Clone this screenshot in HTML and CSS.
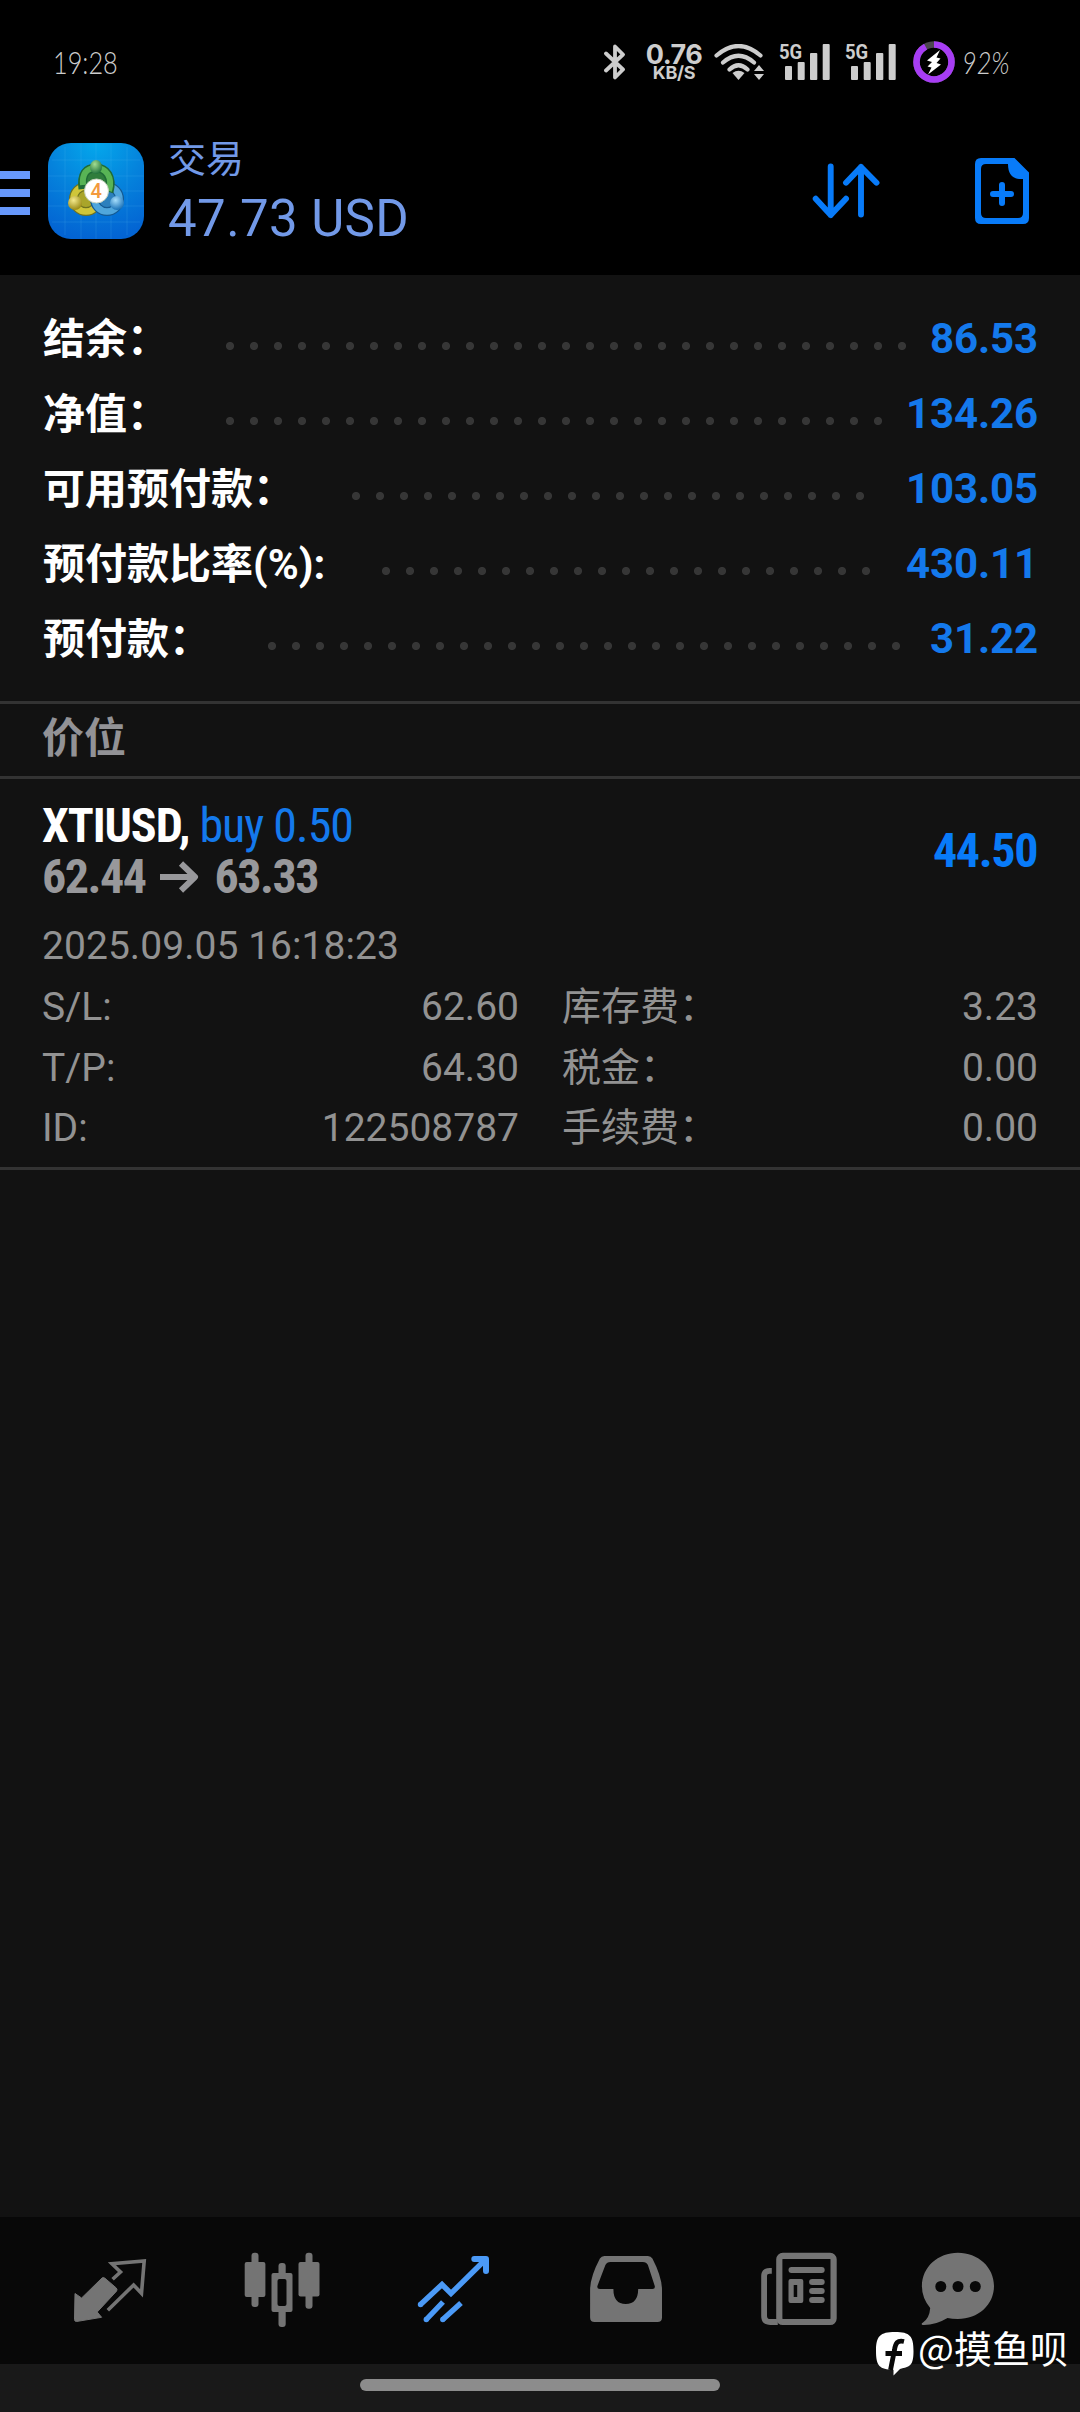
FILE: index.html
```html
<!DOCTYPE html>
<html lang="zh-CN">
<head>
<meta charset="utf-8">
<meta name="viewport" content="width=device-width">
<title>交易</title>
<link rel="stylesheet" href="styles.css">
</head>
<body>
<div class="screen">
  <div class="status">
    <span class="clock">19:28</span>
    <svg class="bt" width="22" height="38" viewBox="0 0 22 38"><path d="M2 10.5 19 26.5 11 34.5V3.500L19 11.500 2 27.500" fill="none" stroke="#cdcdcd" stroke-width="3.8" stroke-linejoin="round" stroke-linecap="round"/></svg>
    <div class="rate"><span class="rate-n">0.76</span><span class="rate-u">KB/S</span></div>
    <svg class="wifi" width="51" height="36" viewBox="0 0 51 36" fill="none" stroke="#cdcdcd" stroke-width="4.200" stroke-linecap="round"><path d="M2.500 11.500Q24.500-7.500 46.500 11.500M9 18.500Q24.500 5 40 18.500M15.500 25.500Q24.500 17 33.500 25.500"/><path d="M18.500 29Q24.500 24.500 30.500 29L24.500 36Z" fill="#cdcdcd" stroke="none"/><path d="M40 27 45 21 50 27ZM40 30 45 36 50 30Z" fill="#cdcdcd" stroke="none"/></svg>
    <div class="signal"><span class="gen">5G</span><svg width="51" height="36" viewBox="0 0 51 36" fill="#cdcdcd"><rect x="6" y="22" width="7" height="14" rx="1"/><rect x="18.700" y="18" width="7" height="18" rx="1"/><rect x="31" y="9" width="7.300" height="27" rx="1"/><rect x="43.700" y="0" width="7" height="36" rx="1"/></svg></div>
    <div class="signal second"><span class="gen">5G</span><svg width="51" height="36" viewBox="0 0 51 36" fill="#cdcdcd"><rect x="6" y="22" width="7" height="14" rx="1"/><rect x="18.700" y="18" width="7" height="18" rx="1"/><rect x="31" y="9" width="7.300" height="27" rx="1"/><rect x="43.700" y="0" width="7" height="36" rx="1"/></svg></div>
    <svg class="ring" width="42" height="42" viewBox="0 0 42 42"><circle cx="21" cy="21" r="17.500" fill="none" stroke="#4c474f" stroke-width="6.600"/><circle cx="21" cy="21" r="17.500" fill="none" stroke="#a73df4" stroke-width="6.600" pathLength="100" stroke-dasharray="92 8" transform="rotate(-90 21 21)"/><path d="M27 9 14 19.500 19 21 14.500 25.500 18.500 26.500 15 33.500 28 23.500 23.500 22 27.500 17.500 23.500 16.500Z" fill="#fff"/></svg>
    <span class="pct">92%</span>
  </div>

  <header class="top">
    <div class="menu"><i></i><i></i><i></i></div>
    <svg class="logo" width="96" height="96" viewBox="0 0 96 96">
      <defs>
        <radialGradient id="bg" cx=".5" cy="0" r="1"><stop offset="0" stop-color="#04a8ec"/><stop offset=".5" stop-color="#0583dc"/><stop offset="1" stop-color="#0364d3"/></radialGradient>
        <radialGradient id="g" cx=".4" cy=".3" r=".7"><stop offset="0" stop-color="#a3dd91"/><stop offset="1" stop-color="#21733c"/></radialGradient>
        <radialGradient id="y" cx=".4" cy=".3" r=".7"><stop offset="0" stop-color="#f4e98c"/><stop offset="1" stop-color="#9b8b16"/></radialGradient>
        <radialGradient id="b" cx=".4" cy=".3" r=".7"><stop offset="0" stop-color="#a5ddfb"/><stop offset="1" stop-color="#1a72b8"/></radialGradient>
      </defs>
      <rect width="96" height="96" rx="23" fill="url(#bg)"/>
      <path d="M17 4V92M33 0V96M48 0V96M63 0V96M79 4V92M4 17H92M0 33H96M0 48H96M0 63H96M4 79H92" stroke="#5bc3f5" stroke-opacity=".18" stroke-width="1"/>
      <circle cx="38" cy="56" r="12.500" fill="#a9a52a" stroke="#6f7220" stroke-width="9"/>
      <circle cx="38" cy="56" r="12.500" fill="none" stroke="#cfc63a" stroke-width="6.500"/>
      <circle cx="59" cy="56" r="12.500" fill="#2c80bd" stroke="#145a93" stroke-width="9"/>
      <circle cx="59" cy="56" r="12.500" fill="none" stroke="#4fa6dc" stroke-width="6.500"/>
      <path d="M35 46C33 31 38 25 48 25S65 34 61 49" fill="#2f7d3c" stroke="#1f6b35" stroke-width="9"/>
      <path d="M35 42C34 31 38 25 48 25S65 34 61 48" fill="none" stroke="#58b455" stroke-width="6"/>
      <ellipse cx="48" cy="24" rx="6" ry="7" fill="url(#g)"/>
      <circle cx="27" cy="60" r="7" fill="url(#y)"/>
      <circle cx="69" cy="60" r="7" fill="url(#b)"/>
      <circle cx="48.500" cy="48" r="12" fill="#fff" stroke="#c5d2be" stroke-width="1"/>
      <text x="48.200" y="55" text-anchor="middle" class="logo-n">4</text>
    </svg>
    <div class="heading"><div class="name">交易</div><div class="total">47.73 USD</div></div>
    <svg class="sort" width="68" height="58" viewBox="812 162 68 58" fill="none" stroke="#087bf9" stroke-width="5.900" stroke-linecap="round" stroke-linejoin="round"><path d="M830.700 166.500V215M815.700 198.700 830.700 215 846 198.700M861 214.500V167M846 182.700 861 167 876.500 182.700"/></svg>
    <svg class="add" width="54" height="66" viewBox="0 0 54 66" fill="#087bf9"><path fill-rule="evenodd" d="M6 0H39.500L54 14.500V60Q54 66 48 66H6Q0 66 0 60V6Q0 0 6 0ZM11 6Q6 6 6 11V55Q6 60 11 60H43Q48 60 48 55V21H44Q33 20 33 6Z"/><path d="M27 27V45M18 36H36" stroke="#087bf9" stroke-width="6" stroke-linecap="round"/></svg>
  </header>

  <section class="summary">
    <div class="line"><span class="label">结余：</span><i class="dots" style="--dots:29"></i><b>86.53</b></div>
    <div class="line"><span class="label">净值：</span><i class="dots" style="--dots:28"></i><b>134.26</b></div>
    <div class="line"><span class="label">可用预付款：</span><i class="dots" style="--dots:22"></i><b>103.05</b></div>
    <div class="line"><span class="label">预付款比率(%):</span><i class="dots" style="--dots:21"></i><b>430.11</b></div>
    <div class="line"><span class="label">预付款：</span><i class="dots" style="--dots:27"></i><b>31.22</b></div>
  </section>

  <h2 class="group">价位</h2>

  <section class="position">
    <div class="deal">
      <div class="deal-text">
        <div class="symbol"><b>XTIUSD,</b> <span class="buy">buy 0.50</span></div>
        <div class="prices"><span>62.44</span><svg width="40" height="34" viewBox="0 0 40 34" fill="none" stroke="#98989b" stroke-width="6"><path d="M0 17H36M21 3.500 35 17 21 30.500" stroke-linejoin="round"/></svg><span>63.33</span></div>
      </div>
      <b class="profit">44.50</b>
    </div>
    <div class="date">2025.09.05 16:18:23</div>
    <dl class="info">
      <div><dt>S/L:</dt><dd>62.60</dd></div><div><dt>库存费：</dt><dd>3.23</dd></div>
      <div><dt>T/P:</dt><dd>64.30</dd></div><div><dt>税金：</dt><dd>0.00</dd></div>
      <div><dt>ID:</dt><dd>122508787</dd></div><div><dt>手续费：</dt><dd>0.00</dd></div>
    </dl>
  </section>

  <nav class="tabs">
    <svg width="76" height="76" viewBox="72 51 76 76"><path d="M75 93.500 81.600 98 102 78Q103.300 76.800 105 78.300L116.300 88Q117.600 89.600 116.500 91.200L97.200 112 101.600 117.300 76.500 121.500Q74.500 121.500 74.500 119.500Z" fill="#747474" stroke="#747474" stroke-width="1" stroke-linejoin="round"/><path d="M112.600 79.300 120.500 72 111.900 63.700 144.200 61 141.500 93.300 133.600 85 107.800 110.300" fill="none" stroke="#747474" stroke-width="3.600"/></svg>
    <svg width="76" height="76" viewBox="243.500 52 76 76" fill="#747474"><rect x="251" y="53.700" width="7" height="54.300" rx="3"/><rect x="244.200" y="63" width="20.700" height="35" rx="2"/><rect x="278" y="64" width="7.200" height="64" rx="3"/><rect x="271" y="74" width="21" height="39" rx="2"/><rect x="277" y="80" width="9" height="27" rx="2" fill="#080808"/><rect x="305" y="53.700" width="7" height="56" rx="3"/><rect x="298" y="63" width="21" height="34.500" rx="2"/></svg>
    <svg width="76" height="76" viewBox="416 51 76 76" fill="none" stroke="#4b9af7" stroke-width="5.400"><path d="M420.500 104.500 442 84.500 451 93.500 485 60M426.300 119.500 443 102M442.800 119.500 461 103"/><path d="M474.300 59H486V71" stroke-width="6" stroke-linecap="round" stroke-linejoin="round"/><g fill="#4b9af7" stroke="none"><circle cx="420.500" cy="104.500" r="2.700"/><circle cx="426.300" cy="119.500" r="2.700"/><circle cx="442.800" cy="119.500" r="2.700"/></g></svg>
    <svg width="76" height="76" viewBox="588.600 51 76 76"><path fill="#747474" fill-rule="evenodd" d="M605 56H648.500Q651.500 56 653 58.500 662.600 77 662.600 90V117.500Q662.600 122 658 122H595.200Q590.700 122 590.700 117.500V90Q590.700 77 600.500 58.500 602 56 605 56ZM611 62Q607.500 62 606 65L598.200 85.500Q597 89 600.500 89H614Q614 104 626.300 104T638.800 89H653Q656.300 89 655.200 85.500L648.500 65Q647 62 643.500 62Z"/></svg>
    <svg width="78" height="76" viewBox="761.200 51 78 76" fill="none" stroke="#747474"><rect x="780.500" y="55.800" width="54.300" height="66.200" rx="3.500" stroke-width="6.200"/><path d="M773 70.800H771Q765.300 70.800 765.300 76V116Q765.300 122 771.300 122H779" stroke-width="5.800"/><g fill="#747474" stroke="none"><rect x="789.700" y="67" width="36.200" height="6" rx="3"/><path fill-rule="evenodd" d="M791.700 79H802.500Q804.500 79 804.500 81V101Q804.500 103 802.500 103H791.700Q789.700 103 789.700 101V81Q789.700 79 791.700 79ZM794.900 85V97H798.400V85Z"/><rect x="810.300" y="79" width="15.600" height="6" rx="3"/><rect x="810.300" y="88" width="15.600" height="6" rx="3"/><rect x="810.300" y="97" width="15.600" height="6" rx="3"/></g></svg>
    <svg class="chat" width="76" height="76" viewBox="920 51 76 76"><path fill="#747474" d="M957.900 52.700C978 52.700 994 67 994 86S978 119 957.900 119Q952 119 947.500 118 935 125.500 922.500 125 920.500 124 923 122.500 929.500 118 930.200 108 921.900 98 921.900 86C921.900 67 938 52.700 957.900 52.700Z"/><g fill="#080808"><circle cx="940.800" cy="86.500" r="5.500"/><circle cx="958" cy="86.500" r="5.500"/><circle cx="975.300" cy="86.500" r="5.500"/></g></svg>
  </nav>
  <div class="gesture"><i></i></div>

  <div class="watermark">
    <svg width="38" height="44" viewBox="0 0 38 44"><path d="M19 0C34 0 37.500 4 37.500 19S34 34.500 24 37L17.500 43.500V37.800C3.500 37.500 0 34 0 19S4 0 19 0Z" fill="#fff"/><path d="M28 9.500C21.500 8 19.500 11 18.500 18L14.500 38M9.500 21.500H26" fill="none" stroke="#080808" stroke-width="4.800"/></svg>
    <span>@摸鱼呗</span>
  </div>
</div>
</body>
</html>
```
FILE: styles.css
```css
* { box-sizing: border-box; }
body {
  margin: 0;
  background: #121212;
  font-family: Roboto, "Noto Sans CJK SC", sans-serif;
}
svg { display: block; flex: none; }
.screen {
  position: relative;
  display: flex;
  flex-direction: column;
  width: 1080px;
  height: 2412px;
  overflow: hidden;
}

/* system status bar */
.status {
  display: flex;
  align-items: center;
  height: 107px;
  padding: 17px 0 0 53px;
  background: #000;
  color: #cdcdcd;
}
.clock, .pct {
  font-family: Lato, sans-serif;
  font-weight: 300;
  font-size: 32px;
  line-height: 36px;
  white-space: nowrap;
  transform: scaleX(.79);
  transform-origin: left;
}
.clock { width: 551px; }
.bt { margin-right: 19px; }
.rate {
  display: flex;
  flex-direction: column;
  align-items: center;
  width: 58px;
  font-family: Inter, sans-serif;
  font-weight: 700;
}
.rate-n { font-size: 27px; line-height: 21px; letter-spacing: -.5px; }
.rate-u { font-size: 18px; line-height: 15px; letter-spacing: -.3px; }
.wifi { margin-left: 11px; }
.signal { position: relative; margin-left: 14px; width: 51px; }
.signal.second { margin-left: 15px; }
.gen {
  position: absolute;
  left: 0;
  top: -2px;
  font-size: 21px;
  line-height: 20px;
  font-weight: 700;
  transform: scaleX(.88);
  transform-origin: left;
}
.ring { margin-left: 17px; }
.pct { margin-left: 7px; font-style: italic; }

/* app header */
.top {
  display: flex;
  align-items: center;
  height: 168px;
  padding-right: 51px;
  background: #000;
}
.menu {
  display: flex;
  flex-direction: column;
  gap: 10px;
  width: 30px;
  margin: 4px 18px 0 0;
}
.menu i { height: 8px; background: #6798fb; }
.logo-n { font: 500 20px Roboto, sans-serif; fill: #f39a3d; }
.heading { margin-left: 24px; flex: 1; color: #7299e8; }
.name { font-size: 38px; line-height: 56px; }
.total { font-size: 51px; line-height: 64px; letter-spacing: .4px; }
.add { margin-left: 95px; }

/* account summary */
.summary { height: 426px; padding: 26px 42px 0 43px; }
.line {
  display: flex;
  height: 75px;
  line-height: 75px;
  font-size: 42px;
  font-weight: 700;
  color: #fff;
}
.label { white-space: nowrap; padding-top: 1px; }
.dots {
  width: calc(var(--dots) * 24px);
  margin: 33px auto 0 49px;
  height: 24px;
  background: radial-gradient(circle at 12px 12px, #363636 3.600px, transparent 4.500px) 0 0 / 24px 24px repeat-x;
}
.line b { color: #1479ec; font-weight: 680; letter-spacing: -.1px; }
.group {
  margin: 0;
  height: 78px;
  padding-left: 42px;
  border: solid #333;
  border-width: 3px 0;
  font-size: 42px;
  line-height: 70px;
  font-weight: 700;
  color: #929296;
}

/* open position */
.position {
  height: 391px;
  padding: 21px 42px 0;
  border-bottom: 3px solid #333;
  color: #929292;
  font-size: 39px;
}
.deal {
  display: flex;
  justify-content: space-between;
  align-items: center;
  font-size: 48px;
  line-height: 51px;
  font-stretch: 75%;
}
.symbol { color: #fff; letter-spacing: -1.100px; }
.symbol .buy { color: #1479ec; letter-spacing: -1px; }
.prices {
  display: flex;
  align-items: center;
  font-weight: 700;
  letter-spacing: -1.500px;
  color: #98989b;
}
.prices svg { margin: 0 14px 0 15px; }
.profit {
  color: #087bf9;
  letter-spacing: -1.400px;
  margin: 0 1px 1px 0;
}
.date { margin-top: 14px; height: 61px; line-height: 60.500px; letter-spacing: .05px; }
.info {
  display: grid;
  grid-template-columns: 477px 476px;
  column-gap: 43px;
  margin: 0;
  line-height: 60.500px;
}
.info div { display: flex; justify-content: space-between; }
.info dd { margin: 0; }

/* bottom navigation */
.tabs {
  display: flex;
  gap: 96px;
  height: 147px;
  margin-top: auto;
  padding: 34px 0 0 72px;
  background: #080808;
}
.chat { margin-left: -14px; }
.gesture {
  display: flex;
  justify-content: center;
  height: 48px;
  padding-top: 15px;
  background: #191919;
}
.gesture i { width: 360px; height: 12px; border-radius: 6px; background: #8c8c8c; }
.watermark {
  position: absolute;
  left: 876px;
  top: 2332px;
  display: flex;
  gap: 4px;
  color: #fff;
  font-family: "Noto Sans CJK SC", sans-serif;
  font-size: 38px;
  line-height: 30px;
  white-space: nowrap;
}
```
